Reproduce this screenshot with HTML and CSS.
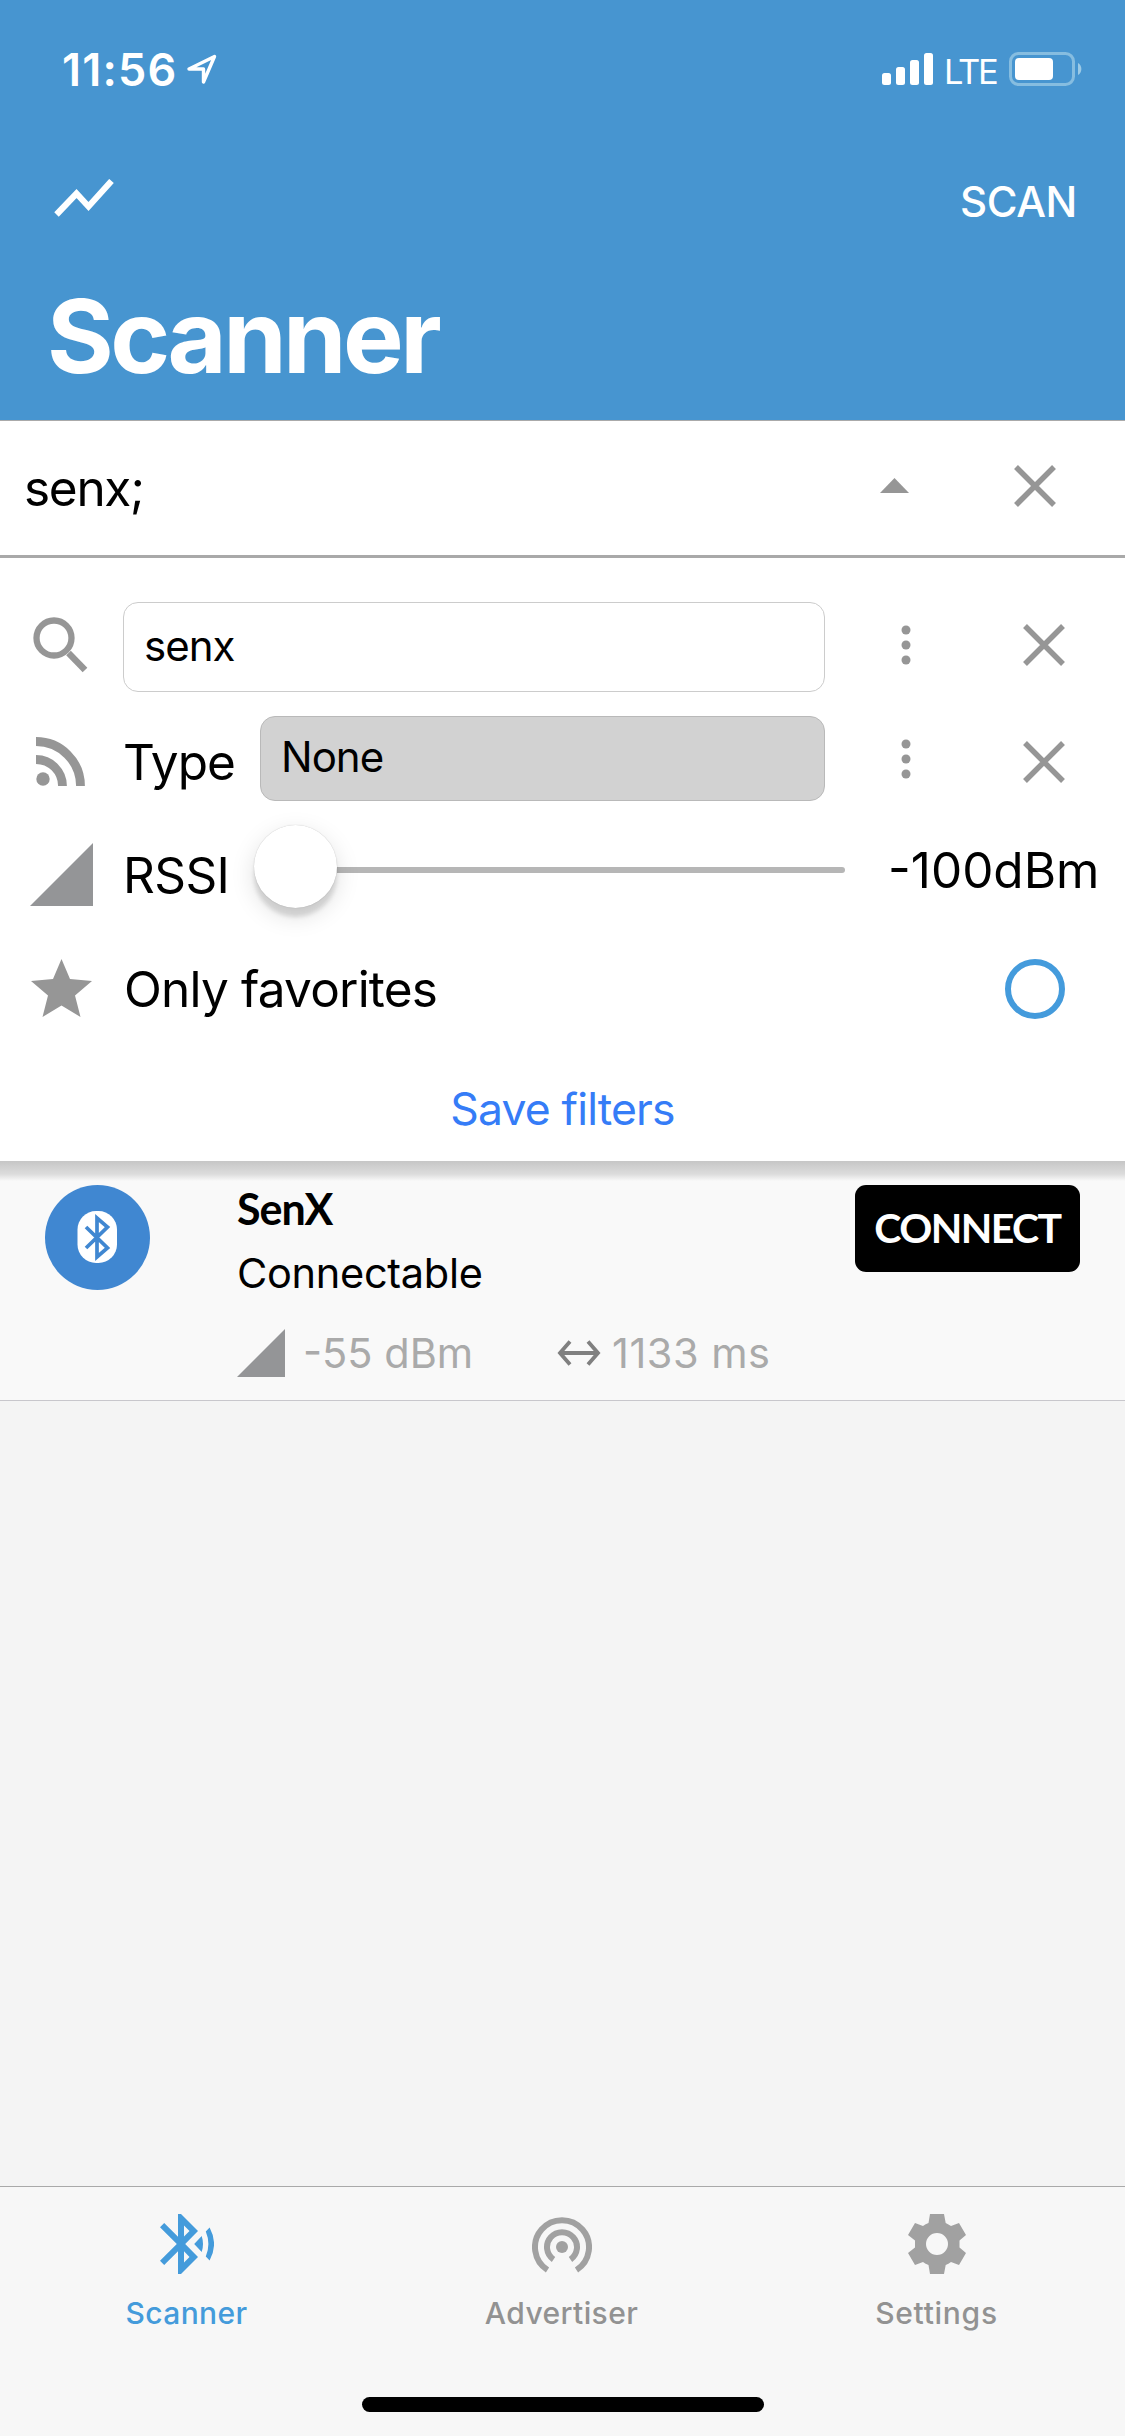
FILE: index.html
```html
<!DOCTYPE html>
<html lang="en">
<head>
<meta charset="utf-8">
<title>Scanner</title>
<link rel="stylesheet" href="styles.css">
</head>
<body>
<header class="header">
  <div class="status">
    <span class="time">11:56</span>
    <svg class="location" width="32" height="32" viewBox="0 0 32 32"><path d="M3 16L28.500 3.500L17.500 29V16Z" fill="none" stroke="#fff" stroke-width="3.400" stroke-linejoin="round"/></svg>
    <svg class="signal" width="51" height="32" viewBox="0 0 51 32" fill="#fff"><rect y="20" width="9" height="12" rx="2.500"/><rect x="14" y="14" width="9" height="18" rx="2.500"/><rect x="28" y="7" width="9" height="25" rx="2.500"/><rect x="42" width="9" height="32" rx="2.500"/></svg>
    <span class="network">LTE</span>
    <svg class="battery" width="73" height="34" viewBox="0 0 73 34"><rect x="1.500" y="1.500" width="63" height="31" rx="8" fill="none" stroke="#86bde0" stroke-width="3"/><rect x="6" y="6" width="38" height="22" rx="4" fill="#fff"/><path d="M69 11a7 7 0 0 1 0 12Z" fill="#9ccae6"/></svg>
  </div>
  <div class="nav">
    <svg class="trend" width="60" height="38" viewBox="0 0 60 38"><path d="M2.500 35.500L22.500 14.500L34.500 27.500L57.500 2" fill="none" stroke="#fff" stroke-width="6.200"/></svg>
    <span class="scan">SCAN</span>
  </div>
  <h1 class="title">Scanner</h1>
</header>
<section class="summary">
  <span class="summary-text">senx;</span>
  <svg class="caret" width="29" height="15" viewBox="0 0 29 15"><path d="M14.500 0L29 15H0Z" fill="#969696"/></svg>
  <svg class="cross" width="42" height="42" viewBox="0 0 42 42"><path d="M2 2L40 40M40 2L2 40" stroke="#969696" stroke-width="5.500"/></svg>
</section>
<section class="filters">
  <div class="row row-name">
    <svg class="icon" width="56" height="56" viewBox="0 0 56 56" fill="none" stroke="#969696"><circle cx="21" cy="21" r="17.500" stroke-width="6.300"/><path d="M35.500 36L52 53" stroke-width="6.500"/></svg>
    <div class="input">senx</div>
    <svg class="dots" width="10" height="40" viewBox="0 0 10 40" fill="#969696"><circle cx="5" cy="5" r="4.500"/><circle cx="5" cy="20" r="4.500"/><circle cx="5" cy="35" r="4.500"/></svg>
    <svg class="cross" width="42" height="42" viewBox="0 0 42 42"><path d="M2 2L40 40M40 2L2 40" stroke="#969696" stroke-width="5.500"/></svg>
  </div>
  <div class="row row-type">
    <svg class="icon" width="49" height="49" viewBox="0 0 49 49"><circle cx="7" cy="42" r="6.700" fill="#969696"/><path d="M0 4.500A44.500 44.500 0 0 1 44.500 49M0 22.500A26.500 26.500 0 0 1 26.500 49" fill="none" stroke="#969696" stroke-width="8.800"/></svg>
    <div class="type-field"><span class="type-label">Type</span><div class="select">None</div></div>
    <svg class="dots" width="10" height="40" viewBox="0 0 10 40" fill="#969696"><circle cx="5" cy="5" r="4.500"/><circle cx="5" cy="20" r="4.500"/><circle cx="5" cy="35" r="4.500"/></svg>
    <svg class="cross" width="42" height="42" viewBox="0 0 42 42"><path d="M2 2L40 40M40 2L2 40" stroke="#969696" stroke-width="5.500"/></svg>
  </div>
  <div class="row row-rssi">
    <svg class="icon" width="63" height="63" viewBox="0 0 63 63"><path d="M63 0V63H0Z" fill="#949597"/></svg>
    <span class="rssi-label">RSSI</span>
    <div class="slider"><i class="knob"></i><i class="track"></i></div>
    <span class="rssi-value">-100dBm</span>
  </div>
  <div class="row row-fav">
    <svg class="icon" width="61" height="58" viewBox="0 0 61 58"><path d="M30.500 0L39 20L61 22L44 36.500L49.500 58L30.500 46.500L11.500 58L17 36.500L0 22L22 20Z" fill="#969696"/></svg>
    <span class="fav-label">Only favorites</span>
    <i class="radio"></i>
  </div>
  <div class="save">Save filters</div>
</section>
<main class="devices">
  <article class="device">
    <svg class="avatar" width="105" height="105" viewBox="0 0 105 105"><circle cx="52.500" cy="52.500" r="52.500" fill="#4087d1"/><rect x="32.500" y="26" width="39.500" height="52" rx="18.500" fill="#fff"/><path d="M41 42L62.500 63L52 72V33L62.500 42L41 63" fill="none" stroke="#4087d1" stroke-width="3.700"/></svg>
    <div class="info">
      <span class="device-name">SenX</span>
      <span class="device-state">Connectable</span>
      <div class="stats">
        <svg width="48" height="48" viewBox="0 0 48 48"><path d="M48 0V48H0Z" fill="#949597"/></svg>
        <span class="signal-text">-55 dBm</span>
        <svg class="arrows" width="44" height="26" viewBox="0 0 44 26" fill="none" stroke="#808080" stroke-width="3.800"><path d="M3 13H41M13 1.500L3 13L13 24.500M31 1.500L41 13L31 24.500"/></svg>
        <span class="interval-text">1133 ms</span>
      </div>
    </div>
    <div class="connect">CONNECT</div>
  </article>
</main>
<footer class="tabbar">
  <div class="tabs">
    <div class="tab active">
      <svg width="54" height="60" viewBox="0 0 54 60"><path fill="#449bdb" fill-rule="evenodd" d="M34.200 30L41.700 38Q43 34 43 30Q43 26 41.700 22ZM49.600 13.500L45.800 17.500Q51 30 45.800 42.500L49.600 46.500Q58.500 30 49.600 13.500ZM38 17L21 0H18V22.800L4.200 9L0 13.200L16.800 30L0 46.800L4.200 51L18 37.200V60H21L38 43L25.200 30ZM24 11.500L29.500 17L24 22.600ZM29.500 43L24 48.600V37.300Z"/></svg>
      <span class="tab-scanner">Scanner</span>
    </div>
    <div class="tab">
      <svg width="60" height="60" viewBox="0 0 60 60" fill="none" stroke="#a1a1a1" stroke-width="6"><circle cx="30" cy="33" r="6" fill="#a1a1a1" stroke="none"/><path d="M21.500 45.500A15 15 0 1 1 38.500 45.500M15.500 56A27 27 0 1 1 44.500 56"/></svg>
      <span class="tab-advertiser">Advertiser</span>
    </div>
    <div class="tab">
      <svg width="60" height="60" viewBox="0 0 60 60"><path fill="#a1a1a1" fill-rule="evenodd" d="M23 0H37L38.700 9Q41.500 10.500 44 12L52 9L59 21L52.500 26.500V33.500L59 39L52 51L44 48Q41.500 50 38.700 51L37 60H23L21.500 51Q18.500 50 16 48L8 51L1 39L8 33.500V26.500L1 21L8 9L16 12Q18.500 10 21.500 9ZM30 19A11 11 0 1 0 30 41A11 11 0 1 0 30 19Z"/></svg>
      <span class="tab-settings">Settings</span>
    </div>
  </div>
  <i class="home"></i>
</footer>
</body>
</html>
```

FILE: styles.css
```css
* { box-sizing: border-box; }

body {
  margin: 0;
  width: 1125px;
  height: 2436px;
  display: flex;
  flex-direction: column;
  overflow: hidden;
  background: #f4f4f4;
  color: #000;
  font-family: Inter, "Liberation Sans", sans-serif;
}

svg { display: block; flex: none; }
i { display: block; }
span { white-space: nowrap; }

.header { height: 420px; background: #4795d0; color: #fff; }
.status { height: 138px; display: flex; align-items: center; padding: 0 43px 0 62px; }
.time { width: 124px; font-size: 45px; font-weight: 600; letter-spacing: 1.2px; }
.signal { margin-left: auto; }
.network { font-size: 34.500px; margin: 4px 0 0 11px; width: 65px; letter-spacing: -2.200px; }
.nav { height: 126px; display: flex; align-items: center; justify-content: space-between; padding: 0 48px 0 54px; }
.trend { margin-top: -6px; }
.scan { font-size: 42px; font-weight: 500; letter-spacing: -0.400px; }
.title { height: 144px; margin: 0; padding-left: 47px; display: flex; align-items: center; font-size: 102px; font-weight: 700; letter-spacing: -3.600px; }

.summary { height: 138px; display: flex; align-items: center; padding: 0 69px 0 24px; background: #fff; border-top: 1px solid #aaa; border-bottom: 3px solid #a9a9a9; }
.summary-text { flex: 1; font-size: 49.500px; letter-spacing: -1.300px; }
.caret { margin: -5px 105px 0 0; }
.summary .cross { margin-top: -4px; }

.filters { height: 603px; padding-top: 44px; background: #fff; }
.row { display: grid; grid-template-columns: 123px 702px 162px 114px; align-items: center; justify-items: center; }
.row-name { height: 90px; }
.row-type { height: 85px; margin-top: 24px; }
.input, .select { display: flex; align-items: center; border: 1px solid #ccc; border-radius: 15px; font-size: 42px; letter-spacing: -1px; }
.input { width: 100%; height: 90px; padding: 0 0 4px 20px; }
.row-name .icon, .row-name .dots, .row-name .cross { margin-top: -4px; }
.row-name .icon, .row-type .icon { margin-right: 2px; }
.type-field { width: 100%; display: flex; align-items: center; }
.type-label { width: 137px; padding-top: 7px; font-size: 49.500px; letter-spacing: -1px; }
.select { flex: 1; height: 85px; padding: 0 0 5px 20px; background: #d2d2d2; border-color: #b9b9b9; }
.row-type .icon, .row-type .cross { margin-top: 6px; }
.row-rssi { height: 138px; display: flex; font-size: 49.500px; }
.row-rssi .icon { margin: 9px 30px 0; }
.rssi-label { width: 131px; padding-top: 10px; letter-spacing: -0.600px; }
.slider { width: 591px; display: flex; align-items: center; }
.knob { width: 83px; height: 83px; margin-top: -8px; border-radius: 50%; background: #fff; position: relative; box-shadow: 0 0 1px rgba(0, 0, 0, 0.25), 0 9px 4px rgba(0, 0, 0, 0.12), 0 8px 24px rgba(0, 0, 0, 0.13); }
.track { width: 508px; height: 6px; background: #b6b6b6; border-radius: 0 3px 3px 0; }
.rssi-value { margin-left: 43px; }
.row-fav { height: 100px; display: flex; padding: 0 60px 0 31px; font-size: 49.500px; }
.row-fav .icon { margin-top: -2px; }
.fav-label { margin-left: 32px; flex: 1; letter-spacing: -0.800px; }
.radio { width: 60px; height: 60px; border: 6px solid #449bdc; border-radius: 50%; }
.save { height: 122px; padding-top: 18px; display: flex; align-items: center; justify-content: center; color: #357cf7; font-size: 44.500px; letter-spacing: -0.850px; }

.devices { flex: 1; }
.device { height: 240px; display: flex; padding: 24px 45px 0; background: linear-gradient(#c6c6c6 0, #dcdcdc 13px, #f9f9f9 20px); border-bottom: 1px solid #c8c7cc; }
.info { display: flex; flex-direction: column; margin-left: 87px; flex: 1; }
.device-name { font-family: Lato, sans-serif; font-weight: 700; font-size: 43px; line-height: 48px; letter-spacing: -1px; }
.device-state { font-size: 41.500px; line-height: 50px; margin-top: 15px; letter-spacing: -0.300px; }
.stats { display: flex; align-items: center; color: #aaa; font-size: 41.500px; height: 48px; margin-top: 31px; }
.signal-text { margin-left: 18px; width: 254px; }
.interval-text { margin-left: 11px; letter-spacing: 0.500px; }
.connect { width: 225px; height: 87px; padding-bottom: 2px; border-radius: 11px; background: #000; color: #fff; display: flex; align-items: center; justify-content: center; font: 700 41px Lato, sans-serif; letter-spacing: -1.600px; }

.tabbar { height: 250px; border-top: 1px solid #a9a9a9; background: #f7f7f7; }
.tabs { display: grid; grid-template-columns: repeat(3, 375px); height: 210px; }
.tab { display: flex; flex-direction: column; align-items: center; padding: 27px 2px 0 0; color: #929292; font-size: 30px; font-weight: 500; letter-spacing: 0.400px; }
.tab span { line-height: 40px; margin-top: 19px; }
.tab .tab-settings { letter-spacing: 0.700px; }
.active { color: #449bdb; }
.home { width: 402px; height: 15px; margin: 0 auto; border-radius: 8px; background: #000; }
```
